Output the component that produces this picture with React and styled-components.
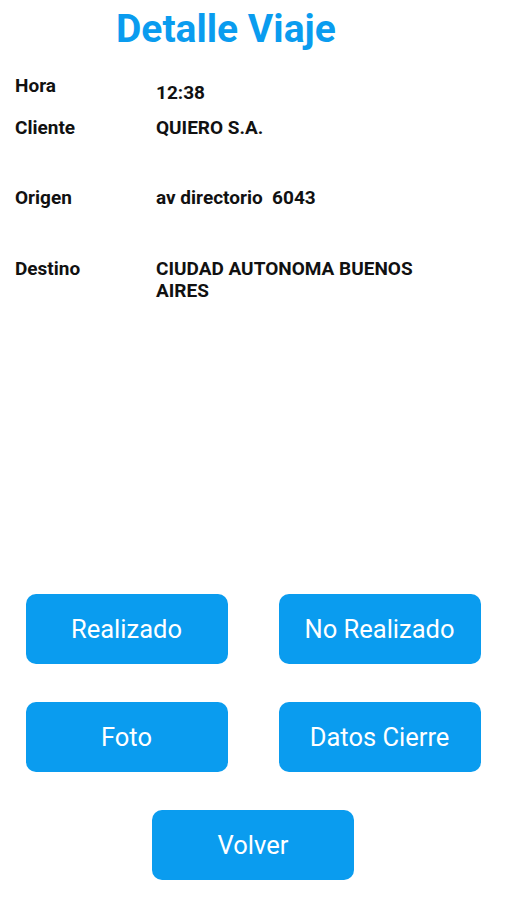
import styled, { createGlobalStyle } from "styled-components";

const GlobalStyle = createGlobalStyle`
  body {
    margin: 0;
    background: #fff;
    font-family: Roboto, "Liberation Sans", sans-serif;
  }
`;

const details = [
  { label: "Hora", value: "12:38", gap: 0, shift: 7 },
  { label: "Cliente", value: "QUIERO S.A.", gap: 13, shift: 0 },
  { label: "Origen", value: "av directorio  6043", gap: 48, shift: 0 },
  { label: "Destino", value: "CIUDAD AUTONOMA BUENOS AIRES", gap: 49, shift: 0 },
];

function App() {
  return (
    <>
      <GlobalStyle />
      <StyledScreen>
        <StyledTitle>Detalle Viaje</StyledTitle>
        <StyledDetails>
          {details.map((d) => (
            <StyledRow key={d.label} $gap={d.gap}>
              <StyledLabel>{d.label}</StyledLabel>
              <StyledValue $shift={d.shift}>{d.value}</StyledValue>
            </StyledRow>
          ))}
        </StyledDetails>
        <StyledActions>
          <StyledButton>Realizado</StyledButton>
          <StyledButton>No Realizado</StyledButton>
          <StyledButton>Foto</StyledButton>
          <StyledButton>Datos Cierre</StyledButton>
          <StyledButton $center>Volver</StyledButton>
        </StyledActions>
      </StyledScreen>
    </>
  );
}

export default App;

const StyledScreen = styled.div`
  width: 506px;
  height: 900px;
  display: flex;
  flex-direction: column;
  box-sizing: border-box;
`;

const StyledTitle = styled.h1`
  margin: 6px 0 0 116px;
  font-size: 39px;
  font-weight: 700;
  color: #0a9cef;
  line-height: 46px;
`;

const StyledDetails = styled.div`
  display: flex;
  flex-direction: column;
  padding: 23px 0 0 15px;
`;

const StyledRow = styled.div`
  display: grid;
  grid-template-columns: 141px 300px;
  margin-top: ${(p) => p.$gap}px;
  color: #111;
  font-size: 19px;
  font-weight: 700;
  line-height: 22px;
`;

const StyledLabel = styled.div``;

const StyledValue = styled.div`
  padding-top: ${(p) => p.$shift}px;
  white-space: pre-wrap;
`;

const StyledActions = styled.div`
  margin-top: auto;
  margin-bottom: 20px;
  display: grid;
  grid-template-columns: 202px 202px;
  justify-content: center;
  column-gap: 51px;
  row-gap: 38px;
`;

const StyledButton = styled.button`
  height: 70px;
  border: none;
  border-radius: 10px;
  background: #0a9cef;
  color: #fff;
  font-family: Roboto, "Liberation Sans", sans-serif;
  font-size: 25.5px;
  font-weight: 400;
  cursor: pointer;
  grid-column: ${(p) => (p.$center ? "1 / span 2" : "auto")};
  justify-self: ${(p) => (p.$center ? "center" : "stretch")};
  width: ${(p) => (p.$center ? "202px" : "auto")};
`;
